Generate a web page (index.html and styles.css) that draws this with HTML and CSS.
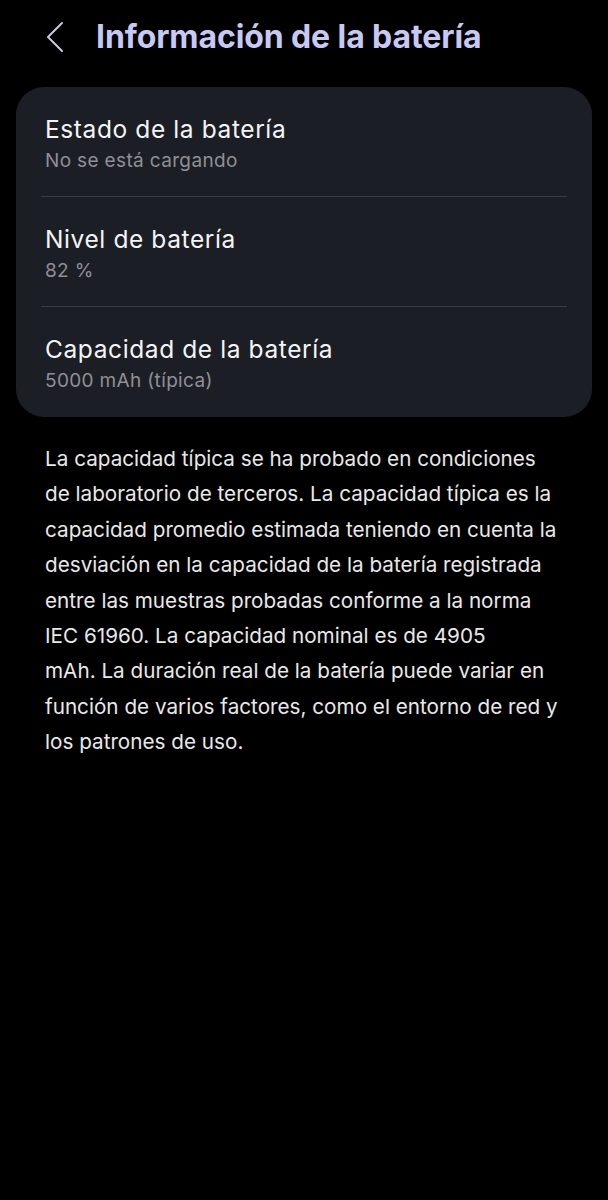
FILE: index.html
```html
<!DOCTYPE html>
<html lang="es">
<head>
<meta charset="utf-8">
<title>Información de la batería</title>
<link rel="stylesheet" href="styles.css">
</head>
<body>
<header class="topbar">
  <svg class="back" width="20" height="32" viewBox="0 0 20 32" aria-hidden="true">
    <path d="M16 2 L2 16 L16 30" fill="none" stroke="#c9c9dc" stroke-width="2" stroke-linecap="round" stroke-linejoin="round"/>
  </svg>
  <h1 class="title">Información de la batería</h1>
</header>
<section class="card">
  <div class="row">
    <div class="row-title">Estado de la batería</div>
    <div class="row-sub">No se está cargando</div>
  </div>
  <div class="divider"></div>
  <div class="row">
    <div class="row-title">Nivel de batería</div>
    <div class="row-sub">82 %</div>
  </div>
  <div class="divider"></div>
  <div class="row">
    <div class="row-title">Capacidad de la batería</div>
    <div class="row-sub">5000 mAh (típica)</div>
  </div>
</section>
<p class="note">La capacidad típica se ha probado en condiciones<br>de laboratorio de terceros. La capacidad típica es la<br>capacidad promedio estimada teniendo en cuenta la<br>desviación en la capacidad de la batería registrada<br>entre las muestras probadas conforme a la norma<br>IEC 61960. La capacidad nominal es de 4905<br>mAh. La duración real de la batería puede variar en<br>función de varios factores, como el entorno de red y<br>los patrones de uso.</p>
</body>
</html>
```

FILE: styles.css
```css
html, body {
  margin: 0;
  padding: 0;
  background: #000;
}
body {
  font-family: Inter, Roboto, "Noto Sans", sans-serif;
  color: #f2f2f2;
  width: 608px;
  min-height: 1200px;
}
.topbar {
  display: flex;
  align-items: center;
  height: 74px;
  padding-left: 46px;
}
.back {
  display: block;
  margin-top: -1px;
}
.title {
  margin: 0 0 0 30px;
  font-size: 32px;
  font-weight: 700;
  color: #c7c9f3;
  letter-spacing: -0.1px;
  line-height: 40px;
}
.card {
  margin: 13px 16px 0 16px;
  background: #1c1e25;
  border-radius: 28px;
  display: flex;
  flex-direction: column;
}
.row {
  height: 110px;
  box-sizing: border-box;
  padding: 27px 29px 0 29px;
}
.row-title {
  font-size: 24.5px;
  letter-spacing: 0.6px;
  line-height: 30px;
  color: #f4f4f4;
}
.row-sub {
  margin-top: 4px;
  font-size: 19px;
  letter-spacing: 0.35px;
  line-height: 26px;
  color: #8f9095;
}
.divider {
  height: 1px;
  margin: -1px 25px 0 25px;
  background: #3a3c43;
}
.note {
  margin: 24px 20px 0 45px;
  font-size: 20.7px;
  line-height: 35.4px;
  color: #e8e8e8;
}
```
